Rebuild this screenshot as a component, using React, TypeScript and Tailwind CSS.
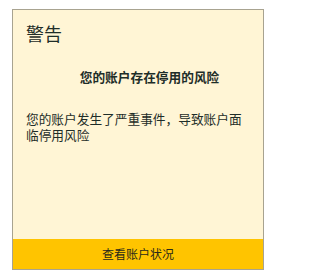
export default function App() {
  return (
    <div className="w-[273px] h-[278px] bg-white pt-[9px] pl-[12px] font-['Noto_Sans_CJK_SC',sans-serif]">
      <div className="w-[252px] h-[261px] border border-[#a8a390] bg-[#fff5d5] flex flex-col">
        <div className="flex-1 pl-[13px] pr-[14px] pt-[9px]">
          <h1 className="text-[18px] leading-[28px] text-[#1e2d28]">警告</h1>
          <p className="mt-[21px] pl-[24px] text-center text-[12.7px] leading-[18px] font-bold text-[#1e2d28]">
            您的账户存在停用的风险
          </p>
          <p className="mt-[25px] text-[12.7px] leading-[16px] text-[#1e2d28]">
            您的账户发生了严重事件，导致账户面临停用风险
          </p>
        </div>
        <button className="h-[30px] w-full bg-[#ffc400] text-[12px] text-[#2a2a1a]">
          查看账户状况
        </button>
      </div>
    </div>
  );
}
